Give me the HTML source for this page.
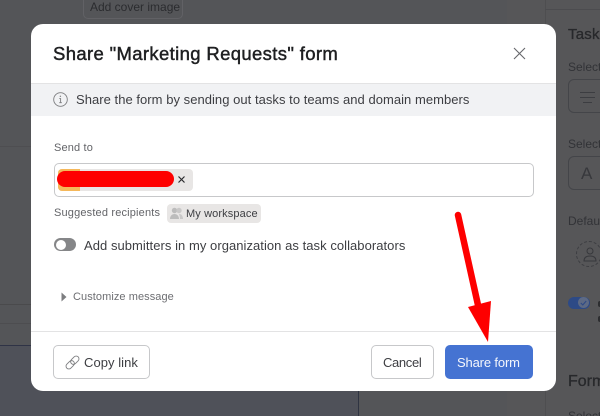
<!DOCTYPE html>
<html><head><meta charset="utf-8"><style>
*{box-sizing:border-box}
html,body{margin:0;padding:0;height:416px;overflow:hidden;background:#545558}
body{width:600px;position:relative;font-family:"Liberation Sans",sans-serif;color:#1e1f21}
.a{position:absolute}
.t{position:absolute;white-space:nowrap;line-height:1}
</style></head><body>
<!-- background -->
<div class="a" style="left:0;top:345px;width:358px;height:71px;background:#4f5159"></div>
<div class="a" style="left:358px;top:345px;width:1px;height:71px;background:#2f3442"></div>
<div class="a" style="left:0;top:304px;width:31px;height:1px;background:#4a4a4c"></div>
<div class="a" style="left:0;top:323px;width:31px;height:1px;background:#4d4d50"></div>
<div class="a" style="left:0;top:345px;width:31px;height:1px;background:#2f3346"></div>
<div class="a" style="left:0;top:146px;width:31px;height:1px;background:#4e4e51"></div>
<div class="a" style="left:507px;top:0;width:93px;height:416px;background:#565658"></div>
<div class="a" style="left:545px;top:0;width:1px;height:416px;background:#4e4e50"></div>
<div class="a" style="left:545px;top:9px;width:55px;height:1px;background:#4c4c4f"></div>
<div class="a" style="left:83px;top:-10px;width:100px;height:29px;border:1px solid #616165;border-radius:5px"></div>
<div class="t" style="left:90px;top:1px;font-size:12px;color:#2b2c2f">Add cover image</div>
<div class="t" style="left:568px;top:27px;font-size:15px;color:#27282b;-webkit-text-stroke:.3px #27282b;letter-spacing:.2px">Task</div>
<div class="t" style="left:568px;top:61px;font-size:12px;color:#323337">Select</div>
<div class="a" style="left:568px;top:79px;width:50px;height:34px;border:1px solid #444549;border-radius:6px"></div>
<div class="a" style="left:580px;top:92px;width:15px;height:1px;background:#3c3d41"></div>
<div class="a" style="left:580px;top:97px;width:15px;height:1px;background:#3c3d41"></div>
<div class="a" style="left:583px;top:102px;width:9px;height:1px;background:#3c3d41"></div>
<div class="t" style="left:568px;top:138px;font-size:12px;color:#323337">Select</div>
<div class="a" style="left:568px;top:156px;width:50px;height:34px;border:1px solid #444549;border-radius:6px"></div>
<div class="t" style="left:581px;top:165px;font-size:17px;color:#37383c">A</div>
<div class="t" style="left:568px;top:215px;font-size:12px;color:#323337">Default</div>
<div class="a" style="left:576px;top:241px;width:26px;height:26px;border:1px dashed #3c3d41;border-radius:50%"></div>
<svg class="a" style="left:583px;top:246px" width="14" height="17" viewBox="0 0 14 17" fill="none" stroke="#37383c"><circle cx="7" cy="5" r="3"/><path d="M1 15c0-4 3-5 6-5s6 1 6 5z"/></svg>
<div class="a" style="left:568px;top:297px;width:22px;height:12px;background:#2d4a86;border-radius:6px"></div>
<div class="a" style="left:578px;top:297px;width:11px;height:11px;background:#5d6a85;border-radius:50%"></div>
<svg class="a" style="left:580px;top:300px" width="7" height="6" viewBox="0 0 7 6" fill="none" stroke="#2d4a86" stroke-width="1.1"><path d="M.8 3l2 2L6.200 1"/></svg>
<div class="a" style="left:598px;top:301px;width:4px;height:6px;background:#2c2d30;border-radius:2px"></div>
<div class="a" style="left:598px;top:316px;width:4px;height:6px;background:#2c2d30;border-radius:2px"></div>
<div class="t" style="left:568px;top:374px;font-size:16px;color:#27282b;-webkit-text-stroke:.3px #27282b">Form</div>
<div class="t" style="left:568px;top:410px;font-size:12px;color:#323337">Select</div>

<!-- modal -->
<div class="a" style="left:31px;top:24px;width:525px;height:367px;background:#fff;border-radius:12px;overflow:hidden">
  <div class="a" style="left:0;top:59px;width:525px;height:33px;background:#f1f2f4;border-top:1px solid #e3e3e4"></div>
  <div class="a" style="left:0;top:307px;width:525px;height:1px;background:#e3e3e4"></div>
</div>
<div class="t" style="left:53px;top:45px;font-size:18.5px;letter-spacing:.35px;color:#1e1f21;-webkit-text-stroke:.45px #1e1f21">Share "Marketing Requests" form</div>
<svg class="a" style="left:513px;top:47px" width="13" height="13" viewBox="0 0 13 13" stroke="#66676b" stroke-width="1.1" fill="none"><path d="M1 1l11 11M12 1L1 12"/></svg>
<svg class="a" style="left:53px;top:92px" width="15" height="15" viewBox="0 0 15 15" fill="none" stroke="#7d7e80" stroke-width=".9"><circle cx="7.5" cy="7.5" r="6.8"/><path d="M6.3 6.6h1.3v4M6.2 10.7h2.700"/><circle cx="7.4" cy="4.3" r=".7" fill="#7d7e80" stroke="none"/></svg>
<div class="t" style="left:76px;top:93px;font-size:13px;letter-spacing:.04px;color:#3d3e42">Share the form by sending out tasks to teams and domain members</div>

<div class="t" style="left:54px;top:143px;font-size:11px;letter-spacing:.15px;color:#636468">Send to</div>
<div class="a" style="left:54px;top:163px;width:480px;height:34px;border:1px solid #c7c8ca;border-radius:5px"></div>
<div class="a" style="left:58px;top:169px;width:135px;height:22px;background:#e8e6e5;border-radius:4px"></div>
<div class="a" style="left:58px;top:169px;width:22px;height:22px;background:#f5b85a;border-radius:4px 0 0 4px"></div>
<div class="a" style="left:57px;top:171px;width:117px;height:16px;background:#fe0000;border-radius:8px"></div>
<svg class="a" style="left:178px;top:176px" width="7" height="7" viewBox="0 0 7 7" stroke="#2a2b2e" stroke-width="1.2" fill="none"><path d="M.5.5l6 6M6.500.5l-6 6"/></svg>

<div class="t" style="left:54px;top:208px;font-size:11px;letter-spacing:.17px;color:#636468">Suggested recipients</div>
<div class="a" style="left:167px;top:204px;width:94px;height:19px;background:#e8e6e5;border-radius:4px"></div>
<svg class="a" style="left:170px;top:207px" width="13" height="13" viewBox="0 0 13 13" fill="#bcbcbc"><circle cx="4.5" cy="3.5" r="2.700"/><circle cx="9" cy="3.5" r="2.700" fill="#c9c8c8"/><path d="M0 12c0-3 2-5 4.500-5S9 9 9 12z"/><path d="M9.500 7C11.500 7 13 9 13 12h-3c0-2-.3-3.500-1-4.500z" fill="#c9c8c8"/></svg>
<div class="t" style="left:186px;top:209px;font-size:11px;letter-spacing:.12px;color:#3d3e42">My workspace</div>

<div class="a" style="left:54px;top:238px;width:22px;height:13px;background:#858688;border-radius:7px"></div>
<div class="a" style="left:56px;top:239.500px;width:10px;height:10px;background:#fff;border-radius:50%"></div>
<div class="t" style="left:84px;top:239px;font-size:13px;letter-spacing:.05px;color:#3d3e42">Add submitters in my organization as task collaborators</div>

<svg class="a" style="left:61px;top:292px" width="6" height="10" viewBox="0 0 6 10" fill="#7d7e80"><path d="M0.500 0.500L5.500 5L0.500 9.500z"/></svg>
<div class="t" style="left:73px;top:292px;font-size:11px;letter-spacing:.07px;color:#6d6e72">Customize message</div>

<!-- buttons -->
<div class="a" style="left:53px;top:345px;width:97px;height:34px;border:1px solid #c7c8ca;border-radius:5px;background:#fff"></div>
<svg class="a" style="left:64px;top:354px" width="17" height="17" viewBox="0 0 17 17" fill="none" stroke="#7d7e80" stroke-width=".9"><g transform="rotate(-45 8.500 8.500)"><rect x="0.500" y="5.700" width="9.500" height="5.600" rx="2.800"/><rect x="7" y="5.700" width="9.500" height="5.600" rx="2.800"/></g></svg>
<div class="t" style="left:84px;top:356px;font-size:13px;letter-spacing:.05px;color:#3d3e42">Copy link</div>
<div class="a" style="left:371px;top:345px;width:63px;height:34px;border:1px solid #c7c8ca;border-radius:5px;background:#fff"></div>
<div class="t" style="left:383px;top:356px;font-size:13px;letter-spacing:-.35px;color:#3d3e42">Cancel</div>
<div class="a" style="left:445px;top:345px;width:88px;height:34px;background:#4573d2;border-radius:5px"></div>
<div class="t" style="left:457px;top:356px;font-size:13px;letter-spacing:-.15px;color:#f4f6fc">Share form</div>

<!-- arrow -->
<svg class="a" style="left:440px;top:205px" width="60" height="145" viewBox="0 0 60 145" fill="#fe0000"><path d="M18 10L38 100" stroke="#fe0000" stroke-width="6.500" stroke-linecap="round" fill="none"/><path d="M28 102L51 96L48 137z"/></svg>
</body></html>
